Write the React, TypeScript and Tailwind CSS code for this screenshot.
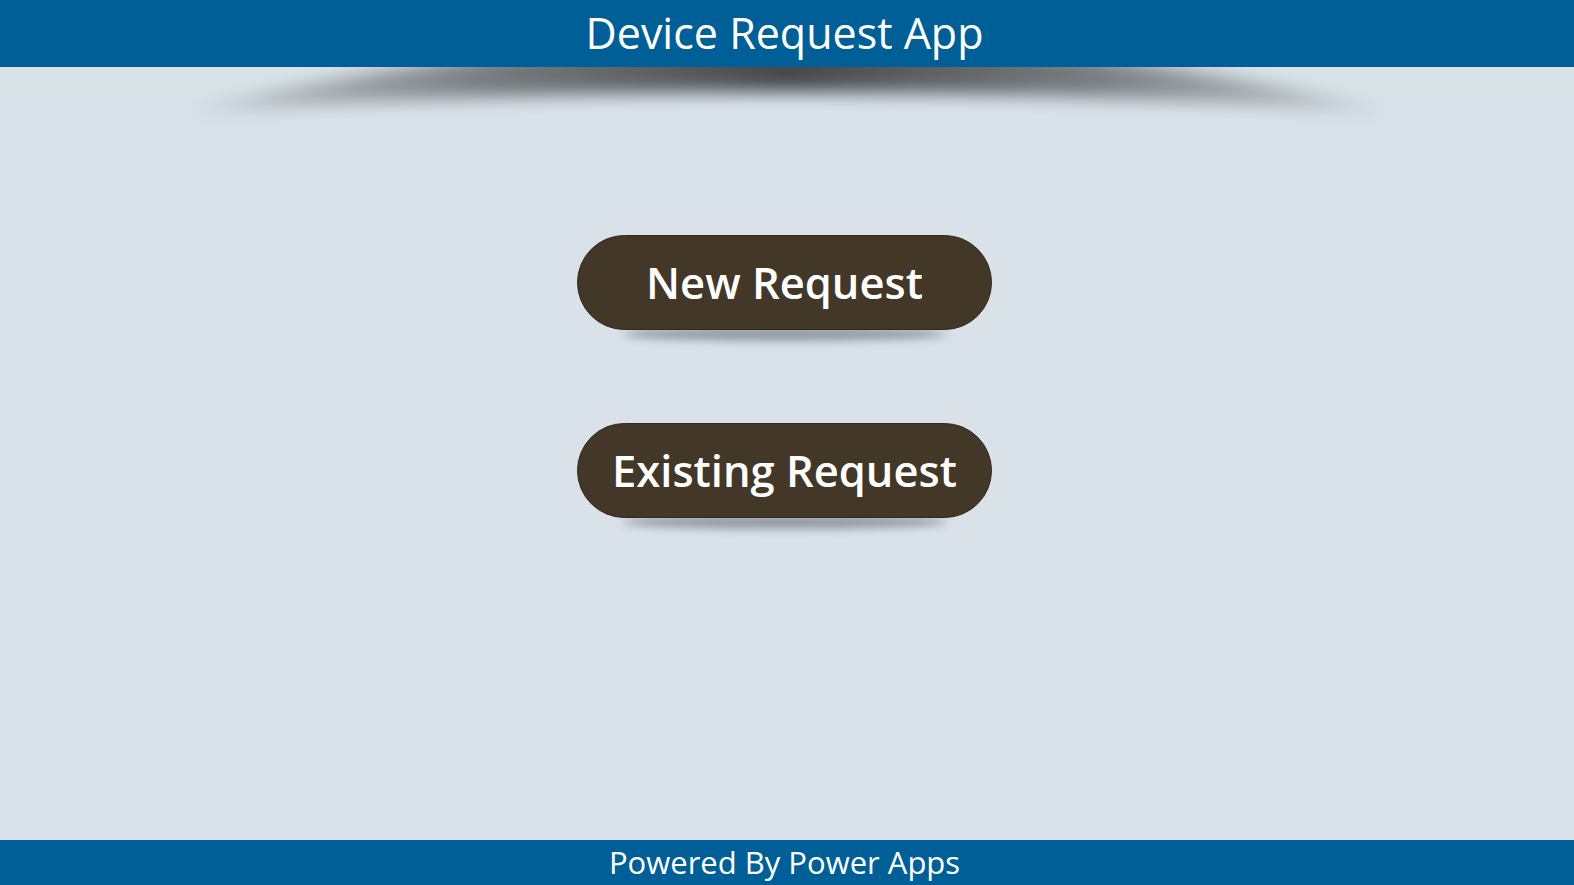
export default function App() {
  return (
    <div className="flex h-[885px] w-full flex-col overflow-hidden bg-[#d9e2e9] pr-[5px] font-['Open_Sans',sans-serif]">
      <header className="relative z-10 -mr-[5px] flex h-[67px] shrink-0 items-center justify-center bg-[#005f96] pb-[3px] pr-[5px]">
        <h1 className="text-[43px] leading-none text-white">Device Request App</h1>
      </header>

      <main className="relative flex flex-1 flex-col items-center pt-[168px]">
        {/* curved shadow under the header */}
        <svg className="pointer-events-none absolute left-0 top-0" width="1574" height="90" viewBox="0 0 1574 90">
          <defs>
            <filter id="hdrBlur" x="-10%" y="-100%" width="120%" height="300%">
              <feGaussianBlur stdDeviation="9" />
            </filter>
            <linearGradient id="hdrFade" x1="0" y1="0" x2="1" y2="0">
              <stop offset="0" stopColor="#000" stopOpacity="0.1" />
              <stop offset="0.25" stopColor="#000" stopOpacity="0.45" />
              <stop offset="0.5" stopColor="#000" stopOpacity="0.68" />
              <stop offset="0.75" stopColor="#000" stopOpacity="0.45" />
              <stop offset="1" stopColor="#000" stopOpacity="0.1" />
            </linearGradient>
          </defs>
          <path d="M185,45 Q787,-105 1390,45 Q787,5 185,45 Z" fill="url(#hdrFade)" filter="url(#hdrBlur)" />
        </svg>

        <div className="flex flex-col gap-[93px]">
          <ActionButton label="New Request" />
          <ActionButton label="Existing Request" />
        </div>
      </main>

      <footer className="-mr-[5px] flex h-[45px] shrink-0 items-center justify-center bg-[#005f96] pr-[5px]">
        <p className="text-[31px] leading-none text-white">Powered By Power Apps</p>
      </footer>
    </div>
  );
}

function ActionButton({ label }: { label: string }) {
  return (
    <div className="relative">
      <div className="absolute -bottom-[11px] left-[45px] right-[45px] h-[14px] rounded-[50%] bg-[#56606a]/55 blur-[4px]" />
      <button
        type="button"
        className="relative flex h-[95px] w-[415px] items-center justify-center rounded-full border border-[#35291b] bg-[#433727] text-[43.5px] font-semibold text-white"
      >
        {label}
      </button>
    </div>
  );
}
